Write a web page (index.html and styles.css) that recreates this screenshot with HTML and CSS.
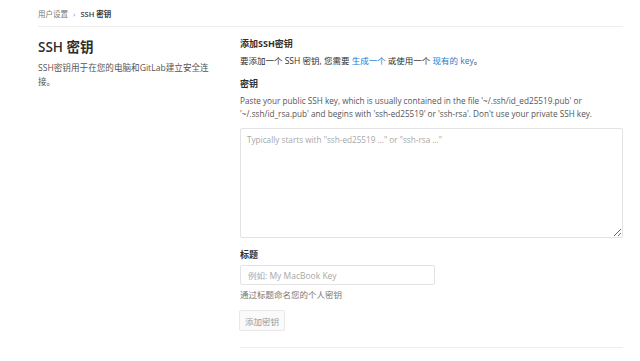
FILE: index.html
```html
<!DOCTYPE html>
<html lang="zh-CN">
<head>
    <meta charset="UTF-8">
    <meta name="viewport" content="width=device-width, initial-scale=1.0">
    <title>SSH 密钥</title>
    <link rel="stylesheet" href="styles.css">
</head>
<body>
    <div class="page">
        <div class="breadcrumbs">
            <span class="crumb">用户设置</span>
            <span class="crumb-sep">›</span>
            <span class="crumb-current">SSH 密钥</span>
        </div>
        <div class="settings">
            <div class="settings-info">
                <h2 class="settings-title">SSH 密钥</h2>
                <p class="settings-desc">SSH密钥用于在您的电脑和GitLab建立安全连接。</p>
            </div>
            <div class="settings-form">
                <h5 class="form-heading">添加SSH密钥</h5>
                <p class="form-intro">要添加一个 SSH 密钥, 您需要 <a href="#">生成一个</a> 或使用一个 <a href="#">现有的 key</a>。</p>

                <label class="label" for="key">密钥</label>
                <p class="help">Paste your public SSH key, which is usually contained in the file '~/.ssh/id_ed25519.pub' or '~/.ssh/id_rsa.pub' and begins with 'ssh-ed25519' or 'ssh-rsa'. Don't use your private SSH key.</p>
                <textarea id="key" class="key-input" placeholder="Typically starts with &quot;ssh-ed25519 …&quot; or &quot;ssh-rsa …&quot;"></textarea>

                <label class="label label-title" for="title">标题</label>
                <input id="title" class="title-input" type="text" placeholder="例如: My MacBook Key">
                <p class="help help-title">通过标题命名您的个人密钥</p>

                <button class="btn-add" disabled>添加密钥</button>
                <hr class="divider">
            </div>
        </div>
    </div>
</body>
</html>
```

FILE: styles.css
```css
body {
    margin: 0;
    font-family: "Open Sans", "Noto Sans CJK SC", sans-serif;
    color: #2e2e2e;
    background: #fff;
}
.page {
    padding: 0 17px 0 38px;
}
.breadcrumbs {
    height: 26px;
    display: flex;
    align-items: center;
    gap: 5px;
    font-size: 7.5px;
    border-bottom: 1px solid #eeeeee;
}
.crumb {
    color: #777;
}
.crumb-sep {
    color: #999;
    font-size: 8px;
}
.crumb-current {
    color: #333;
    font-weight: 600;
}
.settings {
    display: grid;
    grid-template-columns: 180px 1fr;
    column-gap: 22px;
}
.settings-title {
    margin: 10px 0 0;
    font-size: 13.5px;
    font-weight: 600;
    line-height: 20px;
    color: #2e2e2e;
}
.settings-desc {
    margin: 4px 0 0;
    font-size: 8.6px;
    line-height: 14px;
    color: #555;
}
.settings-form {
    padding-top: 10px;
}
.form-heading {
    margin: 0;
    font-size: 9px;
    font-weight: 700;
    line-height: 14px;
}
.form-intro {
    margin: 3px 0 0;
    font-size: 8.5px;
    line-height: 14px;
}
.form-intro a {
    color: #1f78d1;
    text-decoration: none;
}
.label {
    display: block;
    margin-top: 9px;
    font-size: 9px;
    font-weight: 700;
    line-height: 14px;
}
.help {
    margin: 4px 0 0;
    font-size: 8.2px;
    line-height: 12.5px;
    color: #555;
}
.key-input {
    display: block;
    box-sizing: border-box;
    width: 100%;
    height: 110px;
    margin-top: 8px;
    padding: 5px 6px;
    border: 1px solid #e3e3e3;
    border-radius: 2px;
    font-family: inherit;
    font-size: 8.2px;
    resize: vertical;
}
.key-input::placeholder,
.title-input::placeholder {
    color: #a8a8a8;
}
.label-title {
    margin-top: 10px;
}
.title-input {
    display: block;
    box-sizing: border-box;
    width: 195px;
    height: 20px;
    margin-top: 3px;
    padding: 0 7px;
    border: 1px solid #e3e3e3;
    border-radius: 2px;
    font-family: inherit;
    font-size: 8.5px;
}
.help-title {
    margin-top: 3px;
    font-size: 8.5px;
    line-height: 14px;
    color: #777;
}
.btn-add {
    display: block;
    margin: 8px 0 0 -1px;
    height: 21px;
    padding: 0 5px;
    border: 1px solid #e8e8e8;
    border-radius: 2px;
    background: #fafafa;
    color: #999;
    font-family: inherit;
    font-size: 8.5px;
}
.divider {
    margin: 16px 0 0;
    border: 0;
    border-top: 1px solid #eeeeee;
}
```
